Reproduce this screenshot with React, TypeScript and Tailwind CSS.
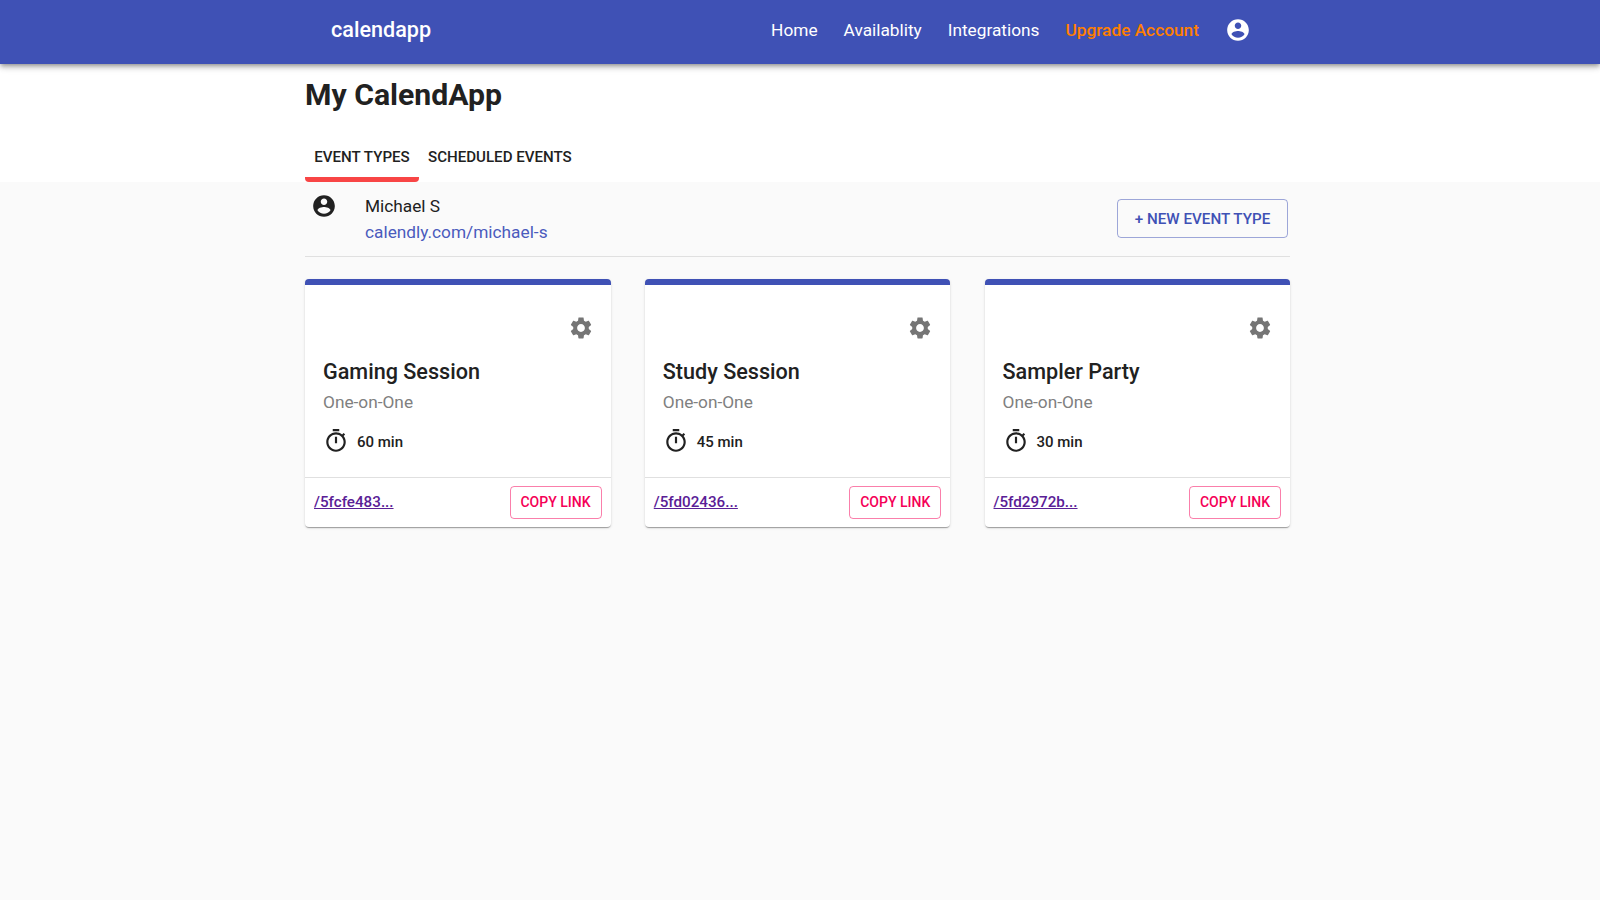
const userPath =
  'M12 2C6.48 2 2 6.48 2 12s4.48 10 10 10 10-4.48 10-10S17.52 2 12 2zm0 3c1.66 0 3 1.34 3 3s-1.34 3-3 3-3-1.34-3-3 1.34-3 3-3zm0 14.2c-2.5 0-4.71-1.28-6-3.22.03-1.99 4-3.08 6-3.08 1.99 0 5.97 1.09 6 3.08-1.29 1.94-3.5 3.22-6 3.22z';
const gearPath =
  'M19.14 12.94c.04-.3.06-.61.06-.94 0-.32-.02-.64-.07-.94l2.03-1.58c.18-.14.23-.41.12-.61l-1.92-3.32c-.12-.22-.37-.29-.59-.22l-2.39.96c-.5-.38-1.03-.7-1.62-.94l-.36-2.54c-.04-.24-.24-.41-.48-.41h-3.84c-.24 0-.43.17-.47.41l-.36 2.54c-.59.24-1.13.57-1.62.94l-2.39-.96c-.22-.08-.47 0-.59.22L2.74 8.87c-.12.21-.08.47.12.61l2.03 1.58c-.05.3-.09.63-.09.94s.02.64.07.94l-2.03 1.58c-.18.14-.23.41-.12.61l1.92 3.32c.12.22.37.29.59.22l2.39-.96c.5.38 1.03.7 1.62.94l.36 2.54c.05.24.24.41.48.41h3.84c.24 0 .44-.17.47-.41l.36-2.54c.59-.24 1.13-.56 1.62-.94l2.39.96c.22.08.47 0 .59-.22l1.92-3.32c.12-.22.07-.47-.12-.61l-2.01-1.58zM12 15.6c-1.98 0-3.6-1.62-3.6-3.6s1.62-3.6 3.6-3.6 3.6 1.62 3.6 3.6-1.62 3.6-3.6 3.6z';
const timerPath =
  'M15 1H9v2h6V1zm-4 13h2V8h-2v6zm8.03-6.61l1.42-1.42c-.43-.51-.9-.99-1.41-1.41l-1.42 1.42C16.07 4.74 14.12 4 12 4c-4.97 0-9 4.03-9 9s4.02 9 9 9 9-4.03 9-9c0-2.12-.74-4.07-1.97-5.61zM12 20c-3.87 0-7-3.13-7-7s3.13-7 7-7 7 3.13 7 7-3.13 7-7 7z';

function Icon({ d, className }: { d: string; className?: string }) {
  return (
    <svg viewBox="0 0 24 24" fill="currentColor" className={className}>
      <path d={d} />
    </svg>
  );
}

const events = [
  { title: 'Gaming Session', mins: '60 min', link: '/5fcfe483...' },
  { title: 'Study Session', mins: '45 min', link: '/5fd02436...' },
  { title: 'Sampler Party', mins: '30 min', link: '/5fd2972b...' },
];

function EventCard({ title, mins, link }: { title: string; mins: string; link: string }) {
  return (
    <div className="w-[305.5px] h-[248px] flex flex-col rounded bg-white border-t-[6px] border-[#3f51b5] shadow-[0_2px_1px_-1px_rgba(0,0,0,0.2),0_1px_1px_0_rgba(0,0,0,0.14),0_1px_3px_0_rgba(0,0,0,0.12)]">
      <div className="flex-1 flex flex-col pl-[18px] pr-[17px] pt-[30px]">
        <div className="flex justify-end">
          <Icon d={gearPath} className="w-[26px] h-[26px] text-[#757575]" />
        </div>
        <div className="mt-[15px] text-[21.6px] leading-[32px] font-medium text-[#212121]">{title}</div>
        <div className="mt-[2px] text-[17.28px] leading-[24px] text-[#808080]">{'One-on-One'}</div>
        <div className="mt-[14px] flex items-center">
          <Icon d={timerPath} className="w-[26px] h-[26px] text-[#212121]" />
          <span className="ml-[8px] mt-[2px] text-[15px] font-medium leading-[24px] text-[#212121]">{mins}</span>
        </div>
      </div>
      <div className="h-[50px] border-t border-[#e0e0e0] flex items-center justify-between pl-[9px] pr-[9px]">
        <a href="#" className="mb-[2px] text-[15.2px] leading-[24px] font-medium text-[#5a2096] underline">{link}</a>
        <button className="h-[33px] w-[92px] rounded border border-[#f50057]/50 text-[14px] font-medium text-[#f50057]">
          COPY LINK
        </button>
      </div>
    </div>
  );
}

export default function App() {
  return (
    <div className="min-h-[900px] bg-[#fafafa] font-['Roboto',sans-serif]">
      <header className="relative z-10 h-[64px] bg-[#3f51b5] shadow-[0_2px_4px_-1px_rgba(0,0,0,0.3),0_4px_5px_0_rgba(0,0,0,0.14),0_1px_10px_0_rgba(0,0,0,0.12)]">
        <div className="w-[985px] ml-[305px] h-[61px] flex items-center pl-[26px] text-white">
          <span className="text-[21.6px] font-medium">calendapp</span>
          <nav className="flex items-center ml-[340px] gap-[26px] text-[17.28px]">
            <span>Home</span>
            <span>Availablity</span>
            <span>Integrations</span>
            <span className="font-medium text-[#ff7f00]">Upgrade Account</span>
            <Icon d={userPath} className="w-[26px] h-[26px] mb-[2px]" />
          </nav>
        </div>
      </header>

      <section className="bg-white h-[118px]">
        <div className="w-[985px] ml-[305px] h-full flex flex-col">
          <h1 className="mt-[9px] text-[30.2px] leading-[44px] font-bold text-[#212121]">My CalendApp</h1>
          <div className="mt-auto flex">
            <div className="relative w-[114px] h-[61px] pt-[12px] flex items-center justify-center text-[15.1px] font-medium text-[#212121]">
              EVENT TYPES
              <span className="absolute bottom-0 left-0 right-0 h-[5px] rounded-b bg-[#f84545]" />
            </div>
            <div className="h-[61px] pt-[12px] px-[9px] flex items-center text-[15.1px] font-medium text-[#212121]">
              SCHEDULED EVENTS
            </div>
          </div>
        </div>
      </section>

      <main className="w-[985px] ml-[305px]">
        <div className="h-[75px] border-b border-[#e0e0e0] flex items-start justify-between">
          <div className="flex">
            <Icon d={userPath} className="w-[26px] h-[26px] ml-[6px] mt-[11px] text-[#212121]" />
            <div className="ml-[28px] mt-[11px] text-[17.28px] leading-[26px]">
              <div className="text-[#212121]">Michael S</div>
              <a href="#" className="text-[#4a5bbd]">calendly.com/michael-s</a>
            </div>
          </div>
          <button className="mt-[17px] mr-[2px] pt-[1px] w-[171px] h-[39px] rounded border border-[#3f51b5]/50 text-[15.2px] font-medium text-[#3f51b5]">
            + NEW EVENT TYPE
          </button>
        </div>
        <div className="mt-[22px] flex justify-between">
          {events.map((e) => (
            <EventCard key={e.title} {...e} />
          ))}
        </div>
      </main>
    </div>
  );
}
